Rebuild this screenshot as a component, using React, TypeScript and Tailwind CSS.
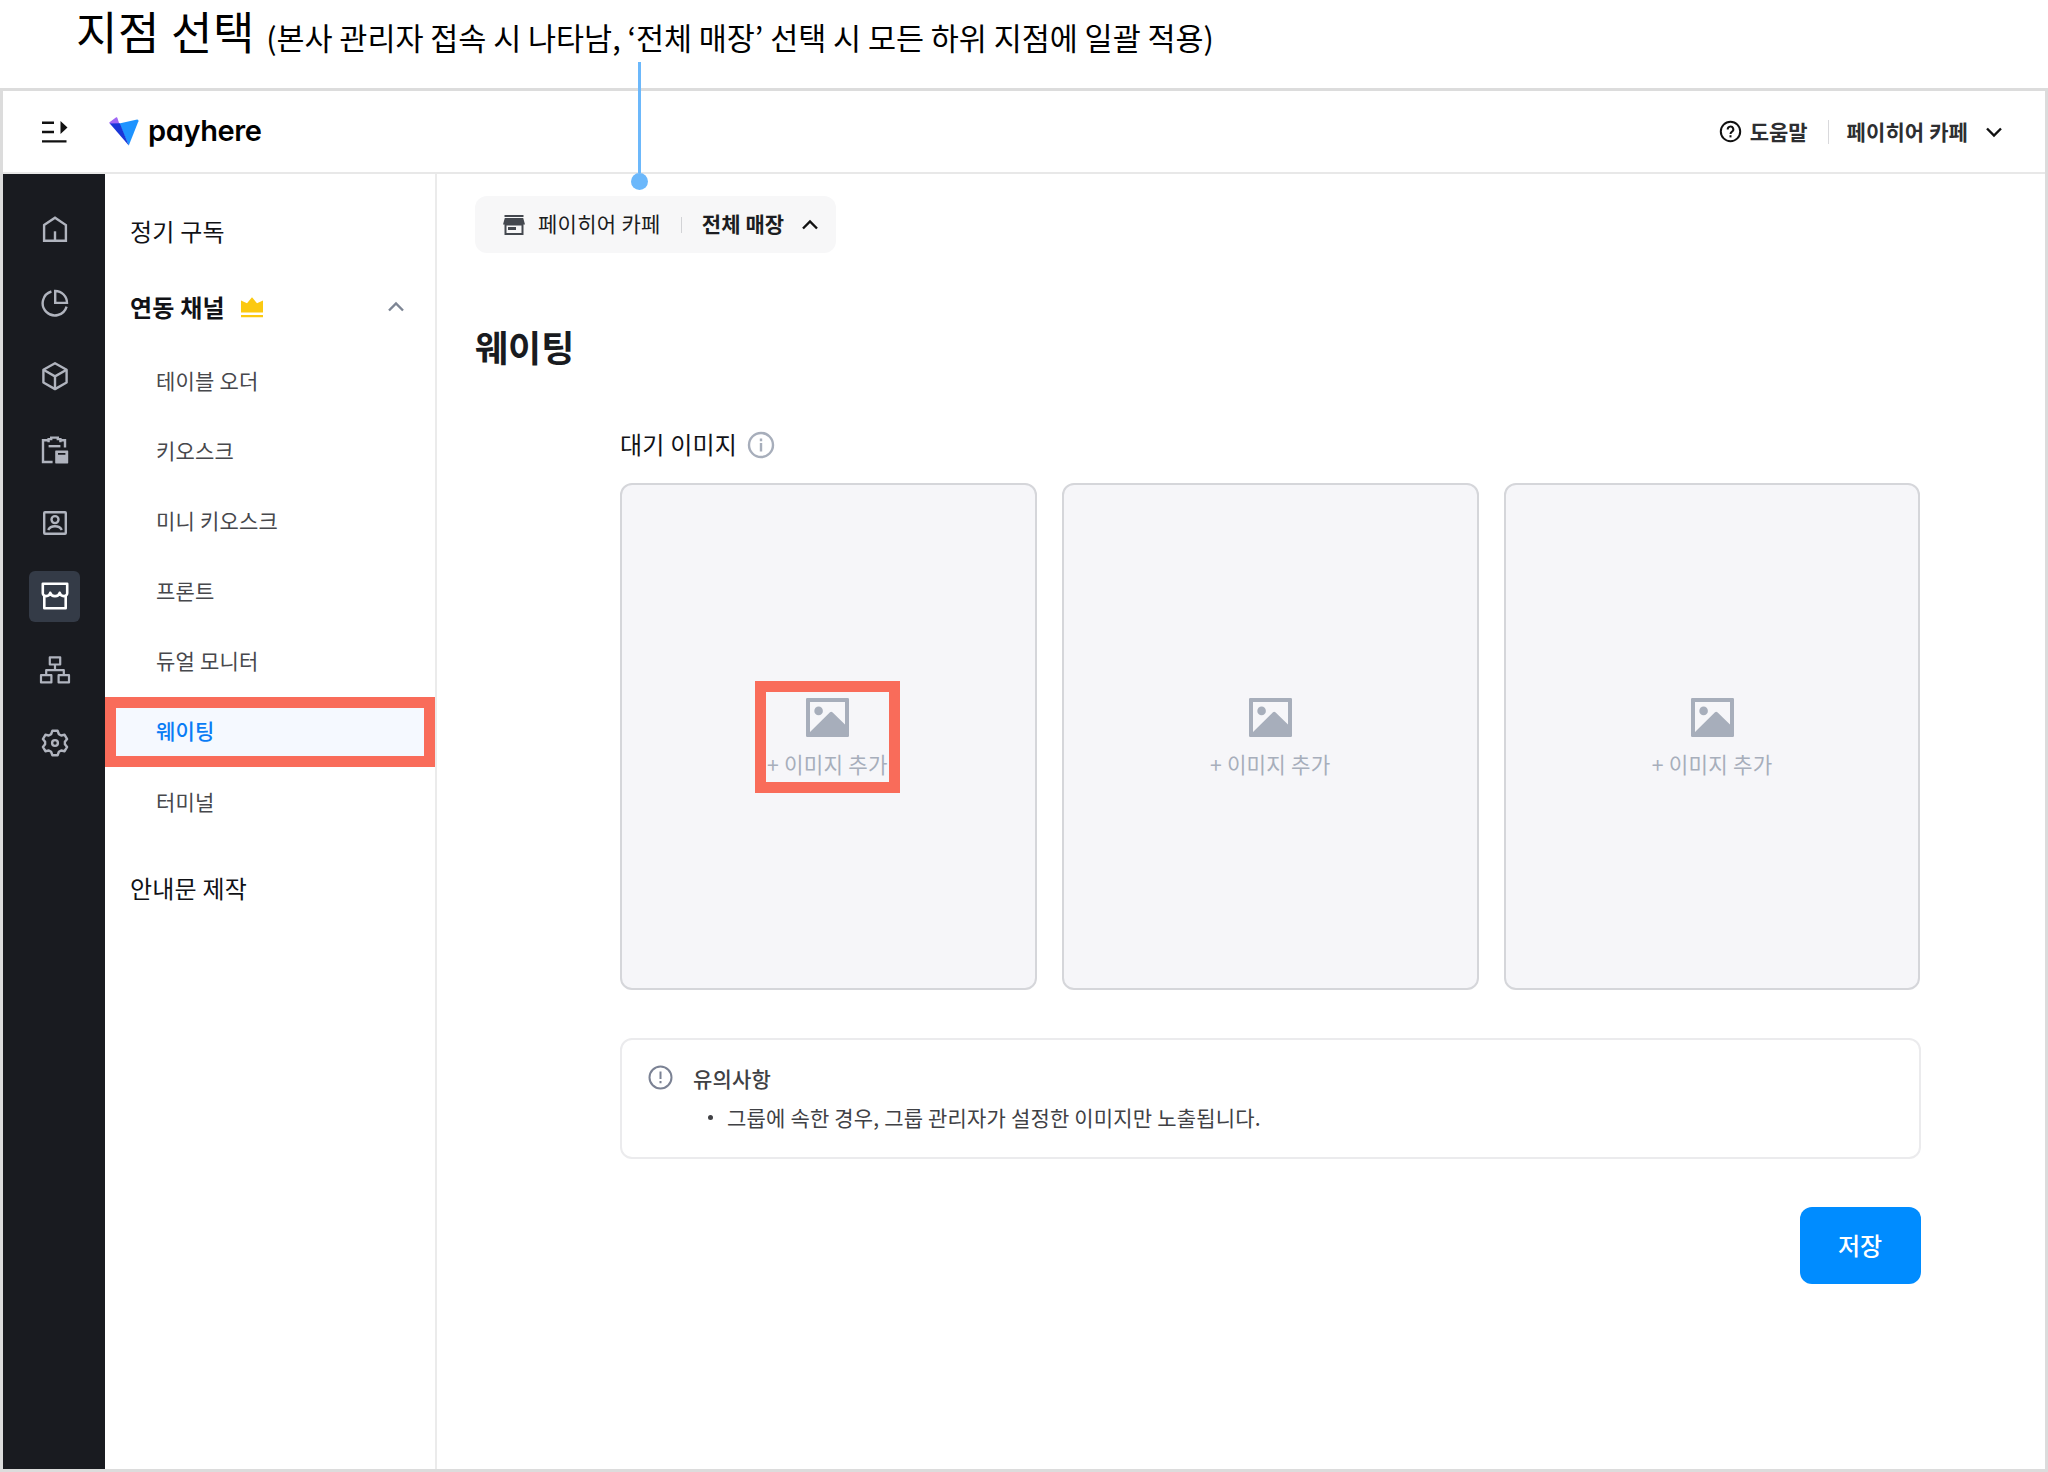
import React from "react";

interface IconProps {
  className?: string;
}

const channelItems = [
  "테이블 오더",
  "키오스크",
  "미니 키오스크",
  "프론트",
  "듀얼 모니터",
  "웨이팅",
  "터미널",
];

function HomeIcon() {
  return (
    <svg width="28" height="28" viewBox="0 0 28 28" fill="none" stroke="currentColor" strokeWidth="2.4">
      <path d="M3.1 9.1 14 1.8l10.9 7.3v15.6H3.1z" />
      <path d="M14 15.3v9" />
    </svg>
  );
}

function ChartIcon() {
  return (
    <svg width="28" height="28" viewBox="0 0 28 28" fill="none" stroke="currentColor" strokeWidth="2.4">
      <path d="M10.4 2.5A12.2 12.2 0 1 0 25.6 17.6" />
      <path d="M14.2 2a11.8 11.8 0 0 1 11.8 11.9H14.2z" />
    </svg>
  );
}

function BoxIcon() {
  return (
    <svg width="28" height="30" viewBox="0 0 28 30" fill="none" stroke="currentColor" strokeWidth="2.4" strokeLinejoin="round">
      <path d="M14 2.2 25.6 8.8v12.7L14 28.1 2.4 21.5V8.8z" />
      <path d="M2.4 8.8 14 15.4l11.6-6.6M14 15.4v12.7" />
    </svg>
  );
}

function ClipboardIcon() {
  return (
    <svg width="28" height="28" viewBox="0 0 28 28" fill="none" stroke="currentColor" strokeWidth="2.4">
      <path d="M11.6 26H2V4.2h5.6M19.4 4.2H24v7.4" />
      <path d="M7.6 6.2V3.1h2.6V1.6h6.6v1.5h2.6v3.1" />
      <path d="M7.6 10.2h11.8" />
      <path
        d="M14.8 14.6h11.8a.6.6 0 0 1 .6.6v11.6a.6.6 0 0 1-.6.6H14.8a.6.6 0 0 1-.6-.6V15.2a.6.6 0 0 1 .6-.6zM17 17v1.8h7.4V17z"
        fill="currentColor"
        fillRule="evenodd"
        stroke="none"
      />
    </svg>
  );
}

function ContactIcon() {
  return (
    <svg width="26" height="26" viewBox="0 0 26 26" fill="none" stroke="currentColor" strokeWidth="2.4" strokeLinejoin="round">
      <rect x="2.2" y="2.2" width="21.6" height="21.6" rx="0.8" />
      <circle cx="13" cy="9.6" r="3.5" />
      <path d="M6.2 20c1.2-2.6 3.8-3.8 6.8-3.8s5.6 1.2 6.8 3.8" />
    </svg>
  );
}

function StoreIcon() {
  return (
    <svg width="30" height="30" viewBox="0 0 30 30" fill="none" stroke="currentColor" strokeWidth="2.6" strokeLinejoin="round">
      <path d="M2.8 2.8h24.4v9.4a3 3 0 0 1-3.2 2.9 4.3 4.3 0 0 1-4.3-3.3 4.7 4.7 0 0 1-4.7 3.3 4.7 4.7 0 0 1-4.7-3.3A4.3 4.3 0 0 1 6 15.1a3 3 0 0 1-3.2-2.9z" />
      <path d="M4.3 15v12.2h21.4V15" />
    </svg>
  );
}

function SitemapIcon() {
  return (
    <svg width="32" height="30" viewBox="0 0 32 30" fill="none" stroke="currentColor" strokeWidth="2.2" strokeLinejoin="round">
      <rect x="10.8" y="2.3" width="10.4" height="7.2" />
      <rect x="2" y="20.2" width="10.4" height="7.2" />
      <rect x="19.6" y="20.2" width="10.4" height="7.2" />
      <path d="M16 9.5v5.6M7.2 20.2v-5.1h17.6v5.1" />
    </svg>
  );
}

function GearIcon() {
  return (
    <svg width="28" height="28" viewBox="0 0 28 28" fill="none" stroke="currentColor" strokeWidth="2.4" strokeLinejoin="round">
      <path d="M11.4 1.8h5.2l1.3 3.4 2.3 1.3 3.4-.7 2.5 4.3-2.2 2.7v2.4l2.2 2.7-2.5 4.3-3.4-.7-2.3 1.3-1.3 3.4h-5.2l-1.3-3.4-2.3-1.3-3.4.7-2.5-4.3 2.2-2.7v-2.4l-2.2-2.7 2.5-4.3 3.4.7 2.3-1.3z" />
      <circle cx="14" cy="14" r="2.9" />
    </svg>
  );
}

function ImageIcon() {
  return (
    <svg width="43" height="39" viewBox="0 0 43 39" fill="#a7aebb">
      <path
        d="M1.2 0h40.6A1.2 1.2 0 0 1 43 1.2v36.6a1.2 1.2 0 0 1-1.2 1.2H1.2A1.2 1.2 0 0 1 0 37.8V1.2A1.2 1.2 0 0 1 1.2 0zM4 4v30L24 14.2a1.8 1.8 0 0 1 2.4 0L39 26.4V4z"
        fillRule="evenodd"
      />
      <circle cx="12.6" cy="12.9" r="4.3" />
    </svg>
  );
}

function CrownIcon() {
  return (
    <svg width="22" height="21" viewBox="0 0 22 21" fill="#fbc911">
      <path d="M0 3.5 6 6.3 11 .3l5 6 6-2.8v12.1H0zM0 18h22v2.2H0z" />
    </svg>
  );
}

function Chevron({ className }: IconProps) {
  return (
    <svg className={className} width="18" height="12" viewBox="0 0 18 12" fill="none" stroke="currentColor">
      <path d="M2 9.5 9 2.5l7 7" />
    </svg>
  );
}

function Logo() {
  return (
    <svg width="30" height="29" viewBox="0 0 30 29">
      <path d="M.5 5.2 7.2.3q.8-.4 1.1.5L10.4 7 1.500 7.200Q-.2 6 .5 5.200z" fill="#a067f5" />
      <path d="M10.200 6.500 28.200 2.500Q29.900 2.500 29.400 4.300L19.800 28.600z" fill="#1e93ff" />
      <path d="M.8 6.400 10.800 6.200 19.800 28.600z" fill="#1a36d8" />
    </svg>
  );
}

const railIcons = [HomeIcon, ChartIcon, BoxIcon, ClipboardIcon, ContactIcon, StoreIcon, SitemapIcon, GearIcon];

function Header() {
  return (
    <header className="flex h-[83px] shrink-0 items-center border-b-2 border-[#e8e8e8] pl-[39px] text-[#111]">
      <svg width="26" height="22" viewBox="0 0 26 22" fill="#111">
        <path d="M0 .6h12v2.4H0zM0 9.8h12v2.4H0zM0 19.2h24.5v2.4H0zM18.5 0 25.5 6.5l-7 6.500z" />
      </svg>
      <div className="ml-[41px] flex items-center">
        <Logo />
        <span className="ml-[9px] pb-[3px] font-[Inter,sans-serif] text-[29px] leading-none font-semibold tracking-[-0.400px] text-black [font-feature-settings:'cv11']">
          payhere
        </span>
      </div>
      <div className="ml-auto flex items-center pr-[42px] text-[21px] leading-none font-bold text-[#2d2e31]">
        <svg width="23" height="23" viewBox="0 0 23 23" fill="none" stroke="#111" strokeWidth="2">
          <circle cx="11.5" cy="11.5" r="9.7" />
          <path d="M8.7 9.5a2.8 2.8 0 1 1 4.3 2.2c-.9.6-1.5 1.1-1.5 2.200" />
          <path d="M11.5 15.2v2.200" />
        </svg>
        <span className="ml-2">도움말</span>
        <span className="mr-[18px] ml-[20px] h-6 w-px bg-[#d9d9dc]" />
        <span className="tracking-[0.1px]">페이히어 카페</span>
        <Chevron className="ml-[17px] rotate-180 stroke-[2.4] text-[#111]" />
      </div>
    </header>
  );
}

function Rail() {
  return (
    <nav className="flex w-[102px] shrink-0 flex-col items-center bg-[#191b20] pt-[30px] text-[#b0b4be]">
      {railIcons.map((Icon, i) => (
        <div key={i} className="flex h-[73.4px] w-full items-start justify-center pl-px">
          <div
            className={`flex h-[51px] w-[51px] items-center justify-center rounded-[6px] ${
              i === 5 ? "bg-[#343b47] text-white" : ""
            }`}
          >
            <Icon />
          </div>
        </div>
      ))}
    </nav>
  );
}

function SideMenu() {
  return (
    <aside className="flex w-[332px] shrink-0 flex-col border-r-2 border-[#ebebeb] pt-[20px] text-2xl leading-none tracking-[0.2px] text-[#111216]">
      <div className="flex h-[76px] items-center pb-[3px] pl-[25px]">정기 구독</div>
      <div className="flex h-[76px] items-center pr-[30px] pb-[2px] pl-[25px] font-bold">
        <span>연동 채널</span>
        <span className="ml-[16px]">
          <CrownIcon />
        </span>
        <Chevron className="ml-auto stroke-[2.4] text-[#7d8594]" />
      </div>
      <ul className="text-[21px] text-[#47484c]">
        {channelItems.map((item) =>
          item === "웨이팅" ? (
            <li
              key={item}
              className="flex h-[70.2px] items-center border-[11px] border-[#f96c5a] bg-[#f5f9ff] pb-[3px] pl-[40px] font-medium text-[#0a7cf5]"
            >
              {item}
            </li>
          ) : (
            <li key={item} className="flex h-[70.2px] items-center pb-[2px] pl-[51px]">
              {item}
            </li>
          )
        )}
      </ul>
      <div className="mt-[13px] flex h-[76px] items-center pb-px pl-[25px]">안내문 제작</div>
    </aside>
  );
}

function ImageSlot({ highlighted }: { highlighted?: boolean }) {
  return (
    <div className="flex h-[507px] flex-1 justify-center rounded-xl border-2 border-[#d5d6da] bg-[#f6f6f9] pt-[196px]">
      <div
        className={`flex h-[112px] w-[145px] flex-col items-center border-[11px] ${
          highlighted ? "-ml-[2px] border-[#f96c5a]" : "border-transparent"
        }`}
      >
        <div className="mt-[6px]">
          <ImageIcon />
        </div>
        <span className="mt-[16px] text-[21.2px] leading-[22px] tracking-[0.25px] whitespace-nowrap text-[#a7aebb]">
          + 이미지 추가
        </span>
      </div>
    </div>
  );
}

function StorePicker() {
  return (
    <div className="flex h-[57px] w-[361px] items-center rounded-xl bg-[#f7f7f8] pl-[28px] text-[21px] leading-none text-[#1c1d21]">
      <svg width="22" height="20" viewBox="0 0 22 20" fill="#44484f">
        <path d="M1.5 0h19v2h-19z" />
        <path d="M1.8 3h18.4L22 9.5h-1.5V20h-19V9.5H0zM3.5 10.5V18h15v-7.5z" fillRule="evenodd" />
        <path d="M5 12h8v3H5z" />
      </svg>
      <span className="ml-[13px] pb-[2px] tracking-[0.3px]">페이히어 카페</span>
      <span className="mx-[20px] h-[16px] w-px bg-[#d2d3d6]" />
      <span className="pb-[2px] font-bold tracking-[0.1px]">전체 매장</span>
      <Chevron className="ml-[17px] stroke-[2.4] text-[#111]" />
    </div>
  );
}

function Notice() {
  return (
    <div className="mt-[48px] flex h-[121px] rounded-xl border-2 border-[#ebebed] pt-[25px] pl-[26px] text-[21px] leading-[28px] text-[#404145]">
      <svg width="25" height="25" viewBox="0 0 25 25" fill="none" stroke="#7b8294" strokeWidth="2">
        <circle cx="12.5" cy="12.5" r="11" />
        <path d="M12.5 6.5V14M12.5 16v2.2" />
      </svg>
      <div className="-mt-px ml-[20px]">
        <p className="font-medium tracking-[0.2px]">유의사항</p>
        <p className="mt-[11px] flex items-center tracking-[0.18px]">
          <span className="mr-[14px] ml-[15px] h-[5px] w-[5px] rounded-full bg-[#404145]" />
          그룹에 속한 경우, 그룹 관리자가 설정한 이미지만 노출됩니다.
        </p>
      </div>
    </div>
  );
}

function Content() {
  return (
    <main className="flex-1 px-[38px] pt-[22px]">
      <StorePicker />
      <h1 className="mt-[75px] text-[36px] leading-[36px] font-bold text-[#191b20]">웨이팅</h1>
      <section className="mr-[86.5px] ml-[145px]">
        <div className="mt-[66px] flex h-[30px] items-center text-2xl leading-none tracking-[0.2px] text-[#111216]">
          <span className="pb-[2px]">대기 이미지</span>
          <svg className="ml-[10px]" width="28" height="28" viewBox="0 0 28 28" fill="none" stroke="#a7aebb" strokeWidth="2.4">
            <circle cx="14" cy="14" r="12" />
            <path d="M14 12v8.5M14 7.5v2.8" />
          </svg>
        </div>
        <div className="mt-[23px] flex gap-[25px]">
          <ImageSlot highlighted />
          <ImageSlot />
          <ImageSlot />
        </div>
        <Notice />
        <div className="mt-[48px] flex justify-end">
          <button className="h-[77px] w-[121px] rounded-xl bg-[#008cff] pb-[2px] text-2xl leading-none font-medium text-white">
            저장
          </button>
        </div>
      </section>
    </main>
  );
}

export default function App() {
  return (
    <div className="relative flex h-[1472px] w-[2048px] flex-col bg-white font-['Noto_Sans_CJK_KR',sans-serif]">
      <div className="flex h-[88px] shrink-0 items-baseline pl-[76px] leading-[62px] whitespace-nowrap text-black">
        <span className="text-[45px] tracking-[0.7px]">지점 선택</span>
        <span className="ml-[11px] text-[30.5px] tracking-[-0.02px]">
          (본사 관리자 접속 시 나타남, ‘전체 매장’ 선택 시 모든 하위 지점에 일괄 적용)
        </span>
      </div>

      <div className="flex min-h-0 flex-1 flex-col border-[3px] border-[#dcdcdc]">
        <Header />
        <div className="flex min-h-0 flex-1">
          <Rail />
          <SideMenu />
          <Content />
        </div>
      </div>

      {/* callout line from the caption down to the store picker */}
      <div className="absolute top-[62px] left-[631px] flex w-[17px] flex-col items-center">
        <span className="h-[111px] w-[3px] bg-[#6cb8fb]" />
        <span className="h-[17px] w-[17px] rounded-full bg-[#6cb8fb]" />
      </div>
    </div>
  );
}
